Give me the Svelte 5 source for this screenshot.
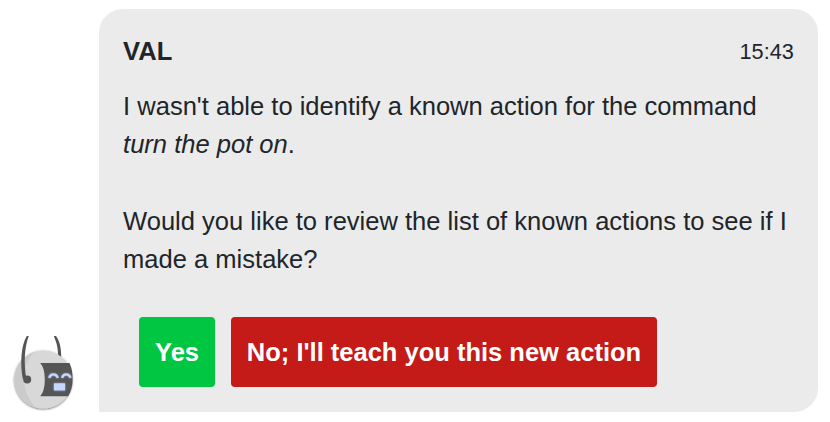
<script lang="ts">
	type Action = { label: string; kind: 'confirm' | 'deny' };

	const sender = 'VAL';
	const time = '15:43';
	const command = 'turn the pot on';

	const actions: Action[] = [
		{ label: 'Yes', kind: 'confirm' },
		{ label: "No; I'll teach you this new action", kind: 'deny' }
	];
</script>

<div class="message">
	<svg class="avatar" viewBox="0 0 72 81.5" role="img" aria-label="VAL">
		<defs>
			<clipPath id="head"><circle cx="33.3" cy="49.5" r="29" /></clipPath>
			<filter id="shadow" x="-20%" y="-20%" width="140%" height="140%">
				<feDropShadow dx="0" dy="0.8" stdDeviation="0.8" flood-color="#000" flood-opacity="0.6" />
			</filter>
			<filter id="glow" x="-30%" y="-30%" width="160%" height="160%">
				<feDropShadow dx="0" dy="0" stdDeviation="1" flood-color="#b4c8ff" flood-opacity="0.6" />
			</filter>
		</defs>
		<path d="M43.8 6 L46 6 C49.8 11 51.2 18 51.2 27 L48 25 C48 17 46.3 12 43.8 6 Z" fill="#555" />
		<circle cx="33.3" cy="49.5" r="29" fill="#d8d8d8" filter="url(#shadow)" />
		<path
			d="M29 19 C10 29 8 64 29 80 L0 80 V19 Z"
			fill="#cbcbcb"
			clip-path="url(#head)"
		/>
		<path
			d="M30.2 33 H59.5 C62 38 62.7 44 62.6 49.7 C62.6 56 61 61.5 58.2 66.3 H30.2 Q34.8 61 34.8 49.7 Q34.8 38 30.2 33 Z"
			fill="#555"
		/>
		<g filter="url(#glow)">
			<path d="M39.2 47.8 C40.6 43.2 46.2 43.2 47.8 47.8 M52 47.8 C53.4 43.2 59 43.2 60.6 47.8" class="eye" />
			<rect x="43.9" y="53.2" width="11.2" height="7.4" rx="0.6" fill="#c5d6ff" />
		</g>
		<path d="M16.8 6 L18.8 6 C14.6 17 13.6 32 16.2 48 L12.8 49 C10 34 11 15 16.8 6 Z" fill="#555" />
		<circle cx="17.2" cy="49.5" r="4" fill="#555" />
	</svg>

	<div class="bubble">
		<header>
			<strong>{sender}</strong>
			<time>{time}</time>
		</header>
		<div class="text">
			I wasn't able to identify a known action for the command<br />
			<em>{command}</em>.
			<br /><br />
			Would you like to review the list of known actions to see if I<br />
			made a mistake?
		</div>
		<div class="actions">
			{#each actions as action}
				<button class={action.kind}>{action.label}</button>
			{/each}
		</div>
	</div>
</div>

<style>
	:global(body) {
		margin: 0;
		background: #fff;
	}

	.message {
		display: flex;
		align-items: flex-end;
		box-sizing: border-box;
		height: 411.5px;
		padding: 9px 11.6px 0 10px;
		color: #212529;
		font-family: Helvetica, 'Liberation Sans', Arial, sans-serif;
		font-size: 25.54px;
		line-height: 38.4px;
	}

	.avatar {
		flex: none;
		width: 72px;
		height: 81.5px;
		margin-right: 17.4px;
	}

	.eye {
		fill: none;
		stroke: #c5d6ff;
		stroke-width: 2.4;
	}

	.bubble {
		flex: 1;
		box-sizing: border-box;
		height: 100%;
		padding: 23.4px 24.6px 23px 23.7px;
		background: #ebebeb;
		border-radius: 24px 24px 24px 0;
		white-space: nowrap;
	}

	header {
		display: flex;
		align-items: center;
		justify-content: space-between;
		margin-bottom: 16px;
	}

	time {
		font-size: 21.7px;
		position: relative;
		top: 0.5px;
	}

	.actions {
		display: flex;
		gap: 15.8px;
		margin: 38.1px 0 0 16px;
	}

	button {
		height: 70.2px;
		padding: 0 16px;
		border: 0;
		border-radius: 4px;
		color: #fff;
		font: inherit;
		font-weight: 700;
		font-size: 25.5px;
	}

	.confirm {
		background: #00c641;
	}

	.deny {
		background: #c41a18;
	}
</style>
